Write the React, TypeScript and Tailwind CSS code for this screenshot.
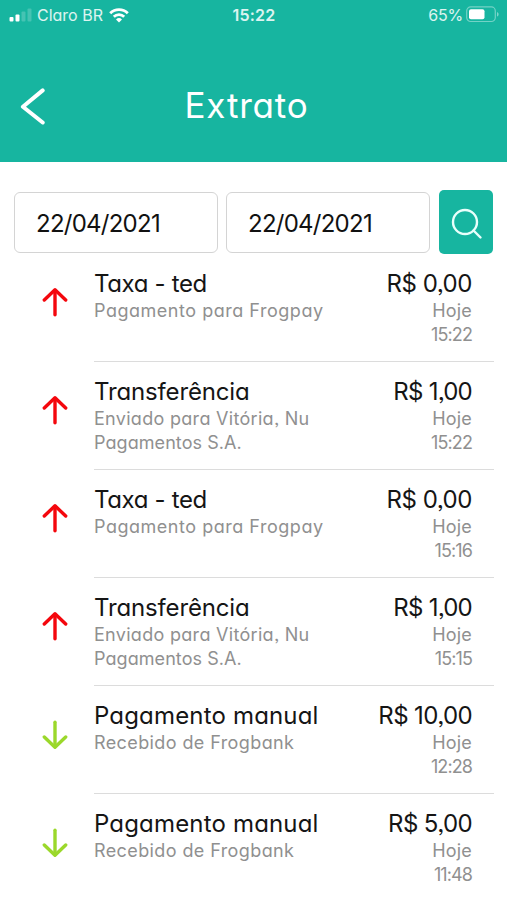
import React from 'react';
import { clsx } from 'clsx';

interface Line {
  text: string;
  className: string;
}

interface Transaction {
  title: string;
  titleClass: string;
  lines: Line[];
  amount: string;
  amountClass: string;
  time: string;
  direction: 'in' | 'out';
}

const fee = {
  title: 'Taxa - ted',
  titleClass: 'tracking-[-0.35px]',
  lines: [{ text: 'Pagamento para Frogpay', className: 'tracking-[0.52px]' }],
  amount: 'R$ 0,00',
  amountClass: 'tracking-[-0.45px]',
  direction: 'out' as const,
};

const transfer = {
  title: 'Transferência',
  titleClass: 'tracking-[-0.15px]',
  lines: [
    { text: 'Enviado para Vitória, Nu', className: 'tracking-[0.3px]' },
    { text: 'Pagamentos S.A.', className: 'tracking-[0.07px]' },
  ],
  amount: 'R$ 1,00',
  amountClass: 'tracking-[-0.75px]',
  direction: 'out' as const,
};

const deposit = {
  title: 'Pagamento manual',
  titleClass: 'tracking-[0.17px]',
  lines: [{ text: 'Recebido de Frogbank', className: 'tracking-[0.4px]' }],
  amountClass: 'tracking-[-0.6px]',
  direction: 'in' as const,
};

const transactions: Transaction[] = [
  { ...fee, time: '15:22' },
  { ...transfer, time: '15:22' },
  { ...fee, time: '15:16' },
  { ...transfer, time: '15:15' },
  { ...deposit, amount: 'R$ 10,00', time: '12:28' },
  { ...deposit, amount: 'R$ 5,00', time: '11:48' },
];

function StatusBar() {
  return (
    <div className="grid h-[30px] grid-cols-3 items-center pl-[9px] pr-[8px] text-white/85">
      <div className="flex items-center">
        <svg width="24" height="14" viewBox="0 0 24 14" fill="#fff">
          <rect x="0.5" y="9" width="4" height="4.5" rx="1" />
          <rect x="6.5" y="6.5" width="4" height="7" rx="1" />
          <rect x="12.5" y="3.5" width="4" height="10" rx="1" opacity="0.2" />
          <rect x="18.5" y="0.5" width="4" height="13" rx="1" opacity="0.2" />
        </svg>
        <span className="ml-[4px] text-[16px] tracking-[0px] whitespace-nowrap">Claro BR</span>
        <svg className="ml-[6px]" width="20" height="16" viewBox="0 0 20 16" fill="none" stroke="#fff" strokeWidth="2.8">
          <path d="M1.2 6.2a12.4 12.4 0 0 1 17.6 0" />
          <path d="M4.8 9.8a7.4 7.4 0 0 1 10.4 0" />
          <path d="M10 15.4 7 12.4a4.3 4.3 0 0 1 6 0z" fill="#fff" stroke="none" />
        </svg>
      </div>
      <span className="text-center text-[16px] font-semibold tracking-[0.2px]">15:22</span>
      <div className="flex items-center justify-end">
        <span className="text-[16px] tracking-[-0.2px]">65%</span>
        <svg className="ml-[3px] -mt-[2px]" width="33" height="17" viewBox="0 0 33 17" fill="none">
          <rect x="0.7" y="0.9" width="28.6" height="14.6" rx="4" stroke="#fff" strokeOpacity="0.4" strokeWidth="1.2" />
          <rect x="3" y="3.2" width="15.5" height="10" rx="2" fill="#fff" />
          <path d="M31 6v4.600c1-.4 1.600-1.300 1.600-2.300S32 6.400 31 6z" fill="#fff" fillOpacity="0.45" />
        </svg>
      </div>
    </div>
  );
}

function Header() {
  return (
    <header className="h-[162px] bg-[#17b5a0]">
      <StatusBar />
      <div className="grid h-[151px] grid-cols-[1fr_auto_1fr] items-center">
        <svg className="ml-[20px]" width="26" height="38" viewBox="0 0 26 38" fill="none" stroke="#fff" strokeWidth="4" strokeLinecap="round" strokeLinejoin="round">
          <path d="M22.700 3.400 2.900 19.700l19.800 15.800" />
        </svg>
        <h1 className="-mt-[2px] -ml-[14px] text-[35px] leading-10 tracking-[0.8px] text-white">Extrato</h1>
      </div>
    </header>
  );
}

function DateField({ value }: { value: string }) {
  return (
    <div className="flex h-[61px] w-[204px] items-center rounded-[6px] border-[1.5px] border-[#d4d4d4] pt-[3px] pl-[21px] text-[24px] tracking-[-0.75px] text-[#111]">
      {value}
    </div>
  );
}

function Arrow({ direction }: { direction: 'in' | 'out' }) {
  return (
    <svg
      className={clsx('h-[30px] w-[26px]', direction === 'out' ? 'text-[#f4070d]' : 'rotate-180 text-[#9bd82b]')}
      viewBox="0 0 26 30"
      fill="none"
      stroke="currentColor"
      strokeWidth="3.4"
      strokeLinecap="round"
    >
      <path d="M13 27.800V3.500" />
      <path d="M2.300 13 13 2.800 23.700 13" strokeLinejoin="round" />
    </svg>
  );
}

function Row({ item, last }: { item: Transaction; last: boolean }) {
  return (
    <li className="flex h-[108px] pr-[13px] pl-[42px]">
      <div className={item.direction === 'out' ? 'pt-[33px]' : 'pt-[34px]'}>
        <Arrow direction={item.direction} />
      </div>
      <div className={clsx('ml-[26px] flex flex-1 justify-between pt-[15px] pr-[22px]', !last && 'border-b-[1.5px] border-[#dcdcdc]')}>
        <div className="whitespace-nowrap">
          <p className={clsx('text-[24px] leading-[30px] text-[#151515]', item.titleClass)}>{item.title}</p>
          {item.lines.map((line) => (
            <p key={line.text} className={clsx('text-[18px] leading-[24px] text-[#909090]', line.className)}>
              {line.text}
            </p>
          ))}
        </div>
        <div className="text-right whitespace-nowrap">
          <p className={clsx('text-[24px] leading-[30px] text-[#151515]', item.amountClass)}>{item.amount}</p>
          <p className="text-[18px] leading-[24px] tracking-[0.2px] text-[#909090]">Hoje</p>
          <p className="text-[18px] leading-[24px] tracking-[-0.9px] text-[#909090]">{item.time}</p>
        </div>
      </div>
    </li>
  );
}

export default function App() {
  return (
    <div className="h-[900px] w-[507px] overflow-hidden bg-white font-['Inter','Noto_Sans',sans-serif] [font-feature-settings:'cv11','ss03']">
      <Header />
      <div className="flex items-center pt-[28px] pl-[14px]">
        <DateField value="22/04/2021" />
        <div className="w-[8px]" />
        <DateField value="22/04/2021" />
        <button className="ml-[9px] flex h-[64px] w-[54px] items-center justify-center rounded-[5px] bg-[#17b5a0] pt-[3px] pl-[2px]">
          <svg width="32" height="32" viewBox="0 0 32 32" fill="none" stroke="#e9fffb" strokeWidth="2.400" strokeLinecap="round">
            <circle cx="14" cy="14" r="12" />
            <path d="m22.500 22.500 7 7" />
          </svg>
        </button>
      </div>
      <ul>
        {transactions.map((item, i) => (
          <Row key={i} item={item} last={i === transactions.length - 1} />
        ))}
      </ul>
    </div>
  );
}
